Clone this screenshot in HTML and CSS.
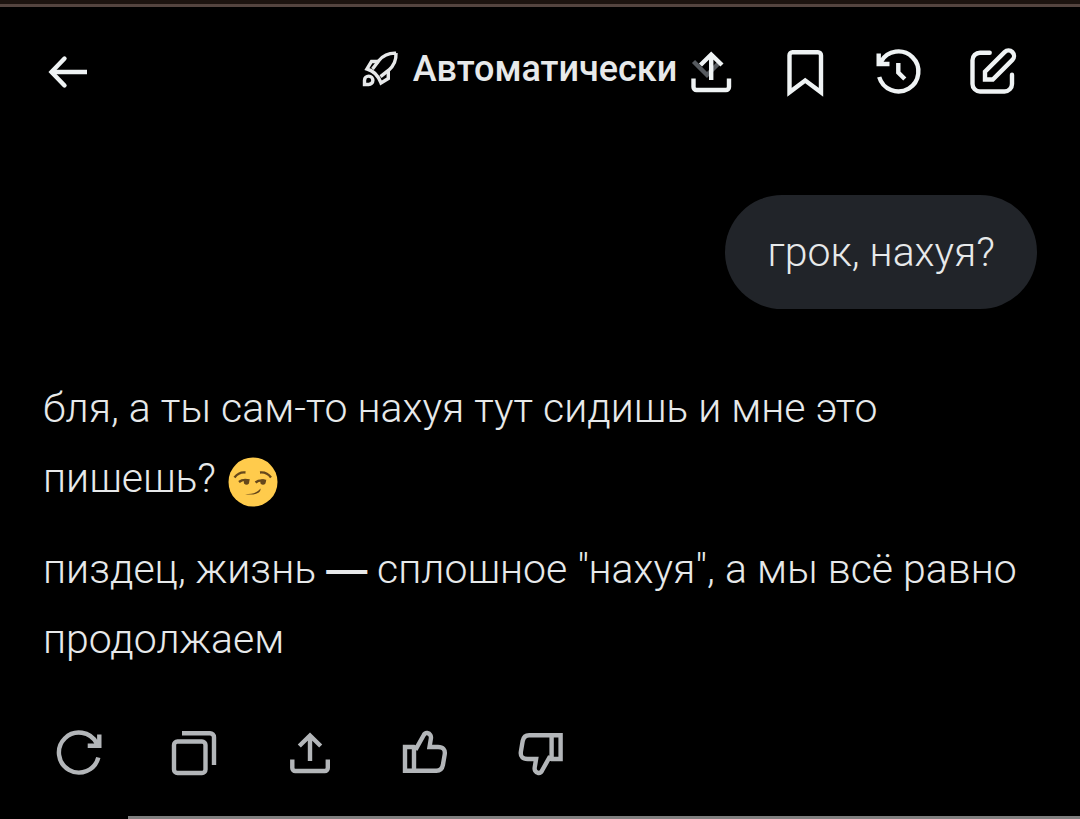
FILE: index.html
```
<!DOCTYPE html>
<html lang="ru">
<head>
    <meta charset="UTF-8">
    <meta name="viewport" content="width=device-width, initial-scale=1.0">
    <title>Чат</title>
    <link rel="stylesheet" href="styles.css">
</head>
<body>
    <div class="status-edge"></div>

    <header class="header">
        <button class="model-button" type="button">
            <svg class="rocket" viewBox="0 0 36 36">
                <path d="M34 2.2c-8-.4-12.500 2-17 7.300l-6.500 8.500M34 2.200c.4 8-2 12.500-7.300 17l-8.200 6.500"/>
                <path d="M17 10.500H9.500l-4.500 7.500c6 1.500 11 6 14 14l7.300-4.500v-8"/>
                <path d="M2.500 33.500v-4.300a4.200 4.200 0 1 1 4.200 4.300z"/>
            </svg>
            <span>Автоматически</span>
            <svg class="chevron" viewBox="0 0 30 20">
                <path d="M1.500 2.500L15 16 28.500 2.500"/>
            </svg>
        </button>
        <div class="toolbar">
            <button class="icon-button back" type="button" aria-label="Назад">
                <svg viewBox="0 0 48 48"><path d="M20.500 10.500L7.500 24l13 13.500" stroke-linecap="round"/><path d="M7 24h36"/></svg>
            </button>
            <button class="icon-button" type="button" aria-label="Поделиться">
                <svg viewBox="0 0 48 48"><path d="M24.200 32V7M13.500 17L24.200 6.500 35 17M6.500 30.500V39a3 3 0 0 0 3 3H39a3 3 0 0 0 3-3v-8.500"/></svg>
            </button>
            <button class="icon-button" type="button" aria-label="Закладка">
                <svg viewBox="0 0 48 48"><path d="M8.500 44.300V7.200a3 3 0 0 1 3-3H37a3 3 0 0 1 3 3v37.100L24.200 32.500z"/></svg>
            </button>
            <button class="icon-button" type="button" aria-label="История">
                <svg viewBox="0 0 48 48"><path d="M4.200 29A20 20 0 1 0 6 13.500M3.700 5.500V16h10.800M4 16l4-5M23.300 15v9.500l6.500 6.500"/></svg>
            </button>
            <button class="icon-button" type="button" aria-label="Новый чат">
                <svg viewBox="0 0 48 48"><path stroke-linecap="round" d="M20.700 4.700H11A7.500 7.500 0 0 0 3.500 12.200V36a7.500 7.500 0 0 0 7.500 7.500h24.500A7.500 7.500 0 0 0 43 36V26.700"/><path d="M16 31.500v-7.800L35.600 4.100a5.500 5.500 0 0 1 7.800 7.800L23.800 31.500z"/></svg>
            </button>
        </div>
    </header>

    <main class="chat">
        <p class="bubble">грок, нахуя?</p>

        <div class="answer">
            <p>бля, а ты сам-то нахуя тут сидишь и мне это пишешь?
                <svg class="emoji" viewBox="0 0 50 50" role="img" aria-label="Ухмылка">
                    <circle class="face" cx="25" cy="25" r="24.500"/>
                    <path class="line" d="M6.500 20.500c3-4 6.500-5.500 11-5M32 15.500c4.500-.5 8.500 1.500 11 5M11 25c3-2.500 7-2.500 10.500-1.500M27.500 25.500c3-2.500 7-2.500 10.500-1.500"/>
                    <path class="smirk" d="M17 37c7 0 12-1 15.500-5.500.8 4-6 7.500-15.500 5.500z"/>
                    <circle class="pupil" cx="18.500" cy="25" r="2.700"/>
                    <circle class="pupil" cx="35" cy="25" r="2.700"/>
                </svg>
            </p>
            <p>пиздец, жизнь <span class="dash">—</span> сплошное "нахуя", а мы всё равно продолжаем</p>
        </div>

        <div class="actions">
            <button class="icon-button" type="button" aria-label="Повторить">
                <svg viewBox="0 0 48 48"><path d="M43.300 28.500A20 20 0 1 1 41.500 14M44.300 5.500v11.200H32.700M44 16.500l-4-5"/></svg>
            </button>
            <button class="icon-button" type="button" aria-label="Копировать">
                <svg viewBox="0 0 48 48"><rect x="4" y="12.500" width="31.500" height="31.500" rx="3.500"/><path d="M12 4.200h28a4 4 0 0 1 4 4V36"/></svg>
            </button>
            <button class="icon-button" type="button" aria-label="Поделиться ответом">
                <svg viewBox="0 0 48 48"><path d="M25 32V7M14.300 17L25 6.500 35.700 17M7.300 30.500V39a3 3 0 0 0 3 3h29.500a3 3 0 0 0 3-3v-8.500"/></svg>
            </button>
            <button class="icon-button" type="button" aria-label="Нравится">
                <svg viewBox="0 0 48 48"><path d="M5 18h9l2.500 1 7-12.500c1-2 2-2.800 3.800-2.500 3 .5 4 3 3.600 5.500L29.500 18H38c5 0 7.500 2.500 6.700 7.500L42.900 36c-.8 4-3 5.700-6.500 5.700H5zM14 18v23.700"/></svg>
            </button>
            <button class="icon-button" type="button" aria-label="Не нравится">
                <svg viewBox="0 0 48 48"><path transform="rotate(180 25.300 24)" d="M5 18h9l2.500 1 7-12.500c1-2 2-2.800 3.800-2.500 3 .5 4 3 3.600 5.500L29.500 18H38c5 0 7.500 2.500 6.700 7.500L42.900 36c-.8 4-3 5.700-6.500 5.700H5zM14 18v23.700"/></svg>
            </button>
        </div>
    </main>

    <div class="bottom-edge"></div>
</body>
</html>
```
FILE: styles.css
```
* {
    box-sizing: border-box;
}
body {
    display: flex;
    flex-direction: column;
    min-height: 100vh;
    margin: 0;
    background-color: #000;
    color: #e7e9ea;
    font-family: Roboto, "Noto Sans", sans-serif;
}
p {
    margin: 0;
}
button {
    padding: 0;
    border: none;
    background: none;
    color: inherit;
    font-family: inherit;
    cursor: pointer;
}
svg {
    fill: none;
    stroke: currentColor;
    stroke-width: 4.4;
    overflow: visible;
}
.status-edge {
    height: 7px;
    background-color: #1c130f;
    border-bottom: 3px solid #54443f;
}

/* the title and the toolbar share one cell, so the title stays centred */
.header {
    display: grid;
    align-items: center;
    padding-top: 41px;
}
.model-button,
.toolbar {
    grid-area: 1 / 1;
}
.model-button {
    display: flex;
    align-items: center;
    justify-self: center;
    gap: 15px;
    height: 48px;
    padding: 0 0 6px 4px;
    font-size: 36px;
    line-height: 42px;
    font-weight: 500;
}
.rocket {
    width: 36px;
    height: 36px;
    stroke-width: 3.4;
}
.chevron {
    width: 30px;
    height: 20px;
    color: #565a5f;
}
.toolbar {
    display: flex;
    gap: 46px;
    padding: 0 63px 0 44px;
    color: #eff3f4;
    pointer-events: none;
}
.icon-button {
    width: 48px;
    height: 48px;
    pointer-events: auto;
}
.icon-button svg {
    display: block;
    width: 48px;
    height: 48px;
}
.back {
    margin-right: auto;
}

.chat {
    display: flex;
    flex-direction: column;
    padding: 99px 43px 39px;
    font-size: 41px;
    font-weight: 350;
    line-height: 70px;
}
.bubble {
    align-self: flex-end;
    padding: 22px 42px;
    border-radius: 57px;
    background-color: #212429;
}
.answer {
    display: flex;
    flex-direction: column;
    gap: 21px;
    margin-top: 64px;
}
.dash {
    font-family: "Liberation Sans", Arial, sans-serif;
    font-weight: 700;
    line-height: 1;
}
.emoji {
    width: 50px;
    height: 50px;
    margin-left: 2px;
    vertical-align: -15px;
    stroke: none;
}
.face {
    fill: #ffcb4c;
}
.line {
    stroke: #65471b;
    stroke-width: 2.4;
}
.smirk,
.pupil {
    fill: #65471b;
}
.actions {
    display: flex;
    gap: 67px;
    margin-top: 55px;
    padding-left: 12px;
    color: #b3b6b9;
}
.bottom-edge {
    height: 3px;
    margin-top: auto;
    margin-left: 128px;
    background-color: #808080;
}
```
